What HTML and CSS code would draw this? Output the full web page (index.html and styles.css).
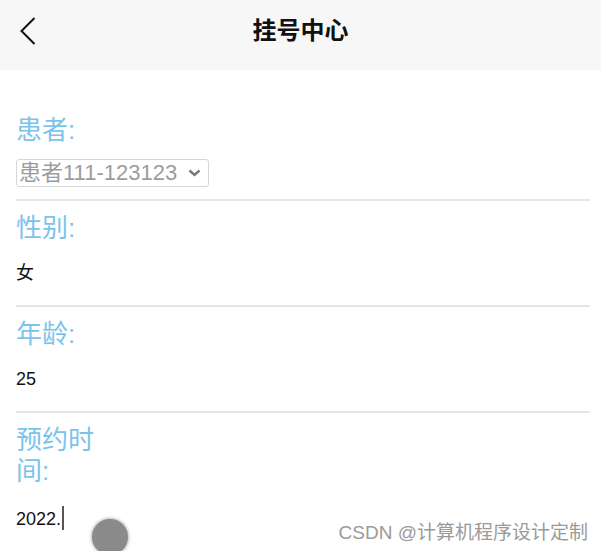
FILE: index.html
```html
<!DOCTYPE html>
<html lang="zh-CN">
<head>
<meta charset="utf-8">
<meta name="viewport" content="width=device-width, initial-scale=1">
<title>挂号中心</title>
<link rel="stylesheet" href="styles.css">
</head>
<body>

<header class="topbar">
  <a class="back" href="#">
    <svg width="18" height="28" viewBox="0 0 18 28"><path d="M15.5 1 L2.5 14 L15.5 27" fill="none" stroke="#111" stroke-width="2"/></svg>
  </a>
  <h1 class="title">挂号中心</h1>
  <span></span>
</header>

<main class="form">
  <div class="field field-first">
    <div class="label">患者:</div>
    <div class="select">
      <span>患者111-123123</span>
      <svg width="13" height="8" viewBox="0 0 13 8"><path d="M1.5 1.5 L6.5 6 L11.5 1.5" fill="none" stroke="#777" stroke-width="2.4"/></svg>
    </div>
  </div>

  <div class="field">
    <div class="label">性别:</div>
    <div class="value">女</div>
  </div>

  <div class="field">
    <div class="label">年龄:</div>
    <div class="value">25</div>
  </div>

  <div class="field">
    <div class="label">预约时间:</div>
    <div class="value">2022.<span class="caret"></span></div>
  </div>
</main>

<div class="touch"></div>
<div class="watermark">CSDN @计算机程序设计定制</div>

</body>
</html>
```

FILE: styles.css
```css
body {
  margin: 0;
  font-family: 'Liberation Sans', 'Noto Sans CJK SC', sans-serif;
  background: #fff;
  color: #111;
}
.topbar {
  height: 70px;
  box-sizing: border-box;
  padding-bottom: 8px;
  background: #f7f7f7;
  display: grid;
  grid-template-columns: 60px 1fr 60px;
  align-items: center;
}
.back {
  display: flex;
  padding-left: 19px;
}
.title {
  margin: 0;
  text-align: center;
  font-size: 24px;
  line-height: 1;
  font-weight: bold;
  color: #111;
}
.form {
  padding: 33px 11px 0 16px;
}
.field {
  padding: 12px 0 22px;
  border-bottom: 2px solid #e6e6e6;
}
.field-first {
  padding-bottom: 12px;
}
.label {
  width: 90px;
  font-size: 26px;
  line-height: 31px;
  color: #7cc3ec;
}
.value {
  margin-top: 19px;
  font-size: 18px;
  line-height: 20px;
  color: #111;
}
.caret {
  display: inline-block;
  width: 2px;
  height: 24px;
  margin-left: 1px;
  vertical-align: -5px;
  background: #555;
}
.select {
  margin-top: 13px;
  width: 193px;
  height: 28px;
  box-sizing: border-box;
  border: 1px solid #d6d6d6;
  border-radius: 3px;
  padding: 0 7px 0 2px;
  display: flex;
  align-items: center;
  justify-content: space-between;
  font-size: 22px;
  line-height: 26px;
  color: #9c9c9c;
}
.touch {
  position: absolute;
  left: 92px;
  top: 519px;
  width: 36px;
  height: 36px;
  border-radius: 50%;
  background: #8a8a8a;
  box-shadow: 0 0 3px 1px rgba(138, 138, 138, 0.6);
}
.watermark {
  position: absolute;
  right: 13px;
  bottom: 7px;
  font-size: 19px;
  line-height: 22px;
  color: #9a9a9a;
}
```
